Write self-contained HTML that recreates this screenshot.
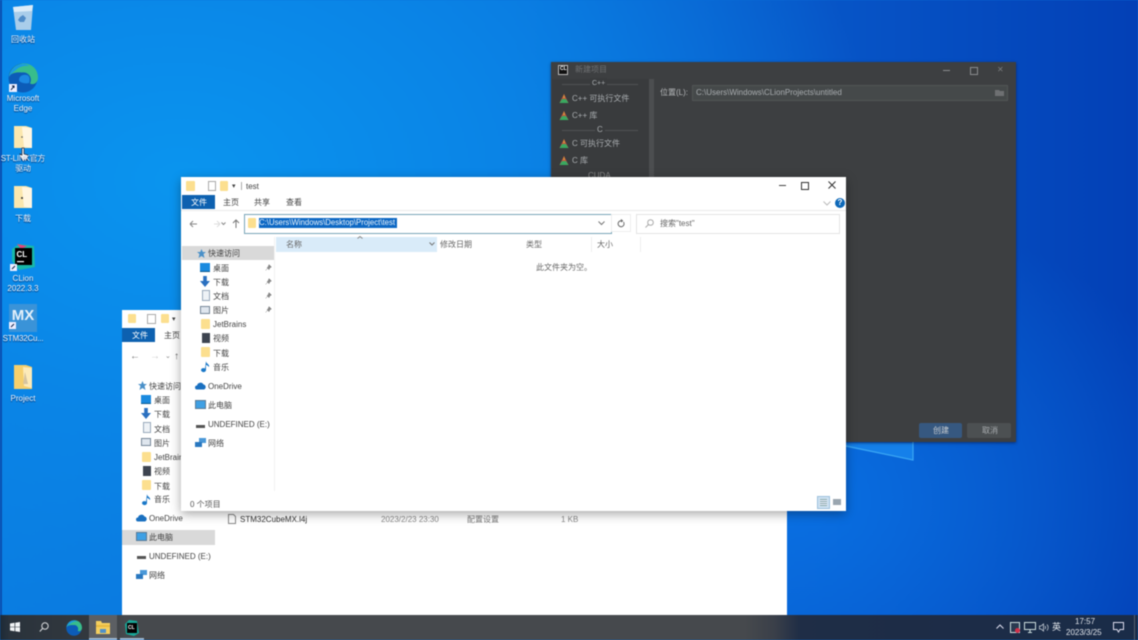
<!DOCTYPE html>
<html><head><meta charset="utf-8"><style>
html,body{margin:0;padding:0;width:1138px;height:640px;overflow:hidden;background:#0a70d8}
#w{position:absolute;left:0;top:0;width:1138px;height:640px;overflow:hidden;filter:blur(.4px);font-family:"Liberation Sans","Noto Sans CJK SC",sans-serif;background:#0a70d8}
.a{position:absolute}
.t{position:absolute;white-space:nowrap;font-size:8px;line-height:12px;color:#444;margin-top:1px}
.d{position:absolute;width:60px;text-align:center;color:#eef6ff;font-size:8px;line-height:10px;text-shadow:0 1px 1px rgba(0,0,50,.7);margin-top:.5px}
svg{position:absolute;overflow:visible}
.f{position:absolute;background:#fcdf8f;border-radius:1px}
.dk{position:absolute;white-space:nowrap;font-size:8px;line-height:12px;color:#a8acaf}
</style></head><body><div id="w">
<div class="a" style="inset:0;background:
radial-gradient(ellipse 420px 300px at 800px 500px,rgba(10,120,235,.75),rgba(10,120,235,0) 100%),
radial-gradient(ellipse 700px 500px at 180px 180px,#0a95ef 0%,rgba(10,135,232,.9) 45%,rgba(10,120,225,0) 100%),
linear-gradient(90deg,#0a7be0 0%,#0a6cd8 45%,#0756c8 72%,#0340b6 100%)"></div>
<div class="a" style="left:0;top:0;width:1.5px;height:615px;background:#0a4fb0"></div>
<svg style="left:0;top:0" width="1138" height="640"><path d="M846 443H913V460L846 447Z" fill="#1580ea"/><path d="M846 446L913 460V442" fill="none" stroke="#3aa6f4" stroke-width="1.2"/></svg>

<!-- desktop icons -->
<svg style="left:11px;top:4px" width="24" height="28" viewBox="0 0 24 28"><path d="M2 3L22 1 20 26H5Z" fill="#a9cdea"/><path d="M2 3L22 1 21 7 3 8Z" fill="#dcecf8"/><path d="M9 13l3-2 3 3-2 4H9l-2-2Z" fill="#4f8cc8"/></svg>
<div class="d" style="left:-7px;top:34px">回收站</div>
<svg style="left:8px;top:63px" width="30" height="30" viewBox="0 0 30 30"><circle cx="15" cy="15" r="14.5" fill="#0c5cb8"/><path d="M1 13C3 4 10 .5 16 .5c8 0 14 6 14 14 0 5-4 8-8 6 3-6-2-12-8-11C8 9 4 10 1 13Z" fill="#38bd8c"/><path d="M1 14C3 5 9 1 15 1c3 0 5 1 6 2-5-1-10 1-13 4-3 2-5 4-7 7Z" fill="#1a9ae4"/><path d="M11 17c0-4 4-6 8-5 3 1 3 5 2 8-4 1-10-.5-10-3Z" fill="#1c88e2"/><rect x="1" y="21" width="8" height="8" fill="#eef"/><path d="M3 27l3-4m-2 0h2v2" stroke="#124" stroke-width="1" fill="none"/></svg>
<div class="d" style="left:-7px;top:93px">Microsoft<br>Edge</div>
<svg style="left:14px;top:125px" width="20" height="24"><path d="M0 1h12l6 2v20H0Z" fill="#fbe7ae"/><path d="M8 2l10 1v20l-8-1Z" fill="#fff6e2"/><circle cx="8" cy="12" r=".8" fill="#555"/></svg>
<svg style="left:19px;top:147px" width="10" height="15"><path d="M3 1v7L1 7l2 6h5l1-5-4-1V1Z" fill="#fff" stroke="#223" stroke-width=".7"/></svg>
<div class="d" style="left:-7px;top:153px;width:60px;letter-spacing:-.2px">ST-LINK官方<br>驱动</div>
<svg style="left:14px;top:185px" width="20" height="24"><path d="M0 1h12l6 2v20H0Z" fill="#fbe7ae"/><path d="M8 2l10 1v20l-8-1Z" fill="#fff6e2"/><circle cx="8" cy="13" r="1" fill="#333"/></svg>
<div class="d" style="left:-7px;top:213px">下载</div>
<svg style="left:9px;top:243px" width="28" height="28" viewBox="0 0 28 28"><path d="M3 6L10 1 25 3 26 24 10 27 3 18Z" fill="#18b8a8"/><path d="M8 1l10 2-6 3Z" fill="#e0447c"/><rect x="6" y="5" width="17" height="17" fill="#000"/><text x="7.5" y="14" font-family="Liberation Sans" font-size="8" font-weight="bold" fill="#fff">CL</text><rect x="8" y="18" width="7" height="1.2" fill="#fff"/><rect x="1" y="21" width="7" height="7" fill="#eef"/><path d="M3 26l3-3" stroke="#124" fill="none"/></svg>
<div class="d" style="left:-7px;top:273px">CLion<br>2022.3.3</div>
<div class="a" style="left:9px;top:304px;width:28px;height:28px;background:#3a93d8"></div>
<div class="a" style="left:9px;top:306px;width:28px;text-align:center;font-size:15px;line-height:20px;font-weight:bold;color:#e4f0fa">MX</div>
<svg style="left:9px;top:322px" width="8" height="8"><rect width="7" height="7" fill="#eef"/><path d="M2 5l3-3" stroke="#124" fill="none"/></svg>
<div class="d" style="left:-7px;top:333px;letter-spacing:-.2px">STM32Cu...</div>
<svg style="left:14px;top:364px" width="20" height="26"><path d="M0 1h12l6 2v22H0Z" fill="#f6cf6c"/><path d="M9 3l9 1v20l-8-2Z" fill="#fdeab8"/><path d="M11 8l3 12h-5Z" fill="#d6c4a0"/></svg>
<div class="d" style="left:-7px;top:393px">Project</div>

<!-- dark window -->
<div class="a" style="left:551px;top:62px;width:465px;height:380px;background:#3d3f41;box-shadow:0 1px 3px rgba(0,0,40,.5)"></div>
<div class="a" style="left:552px;top:79px;width:97px;height:363px;background:#393b3d"></div>
<div class="a" style="left:649px;top:79px;width:5px;height:363px;background:#4c4e50"></div>
<div class="a" style="left:558px;top:65px;width:10px;height:10px;background:#111;border:.5px solid #bbb;box-sizing:border-box"></div>
<div class="a" style="left:560px;top:65px;font-size:5px;line-height:8px;font-weight:bold;color:#fff">CL</div>
<div class="dk" style="left:575px;top:64px;color:#6f7173">新建项目</div>
<div class="a" style="left:943px;top:70px;width:7px;height:1px;background:#8a8c8e"></div>
<div class="a" style="left:970px;top:67px;width:6px;height:6px;border:1px solid #8a8c8e"></div>
<div class="dk" style="left:997px;top:64px;color:#7a7c7e">✕</div>
<div class="a" style="left:562px;top:84px;width:76px;height:1px;background:#4f5153"></div>
<div class="dk" style="left:590px;top:78px;background:#393b3d;padding:0 2px;font-size:7px">C++</div>
<div class="a" style="left:562px;top:130px;width:76px;height:1px;background:#4f5153"></div>
<div class="dk" style="left:595px;top:124px;background:#393b3d;padding:0 2px">C</div>
<div class="dk" style="left:588px;top:170px;color:#888">CUDA</div>
<svg style="left:559px;top:94px" width="10" height="75"><defs><g id="tri"><path d="M5 0L9.5 9H.5Z" fill="#c8503c"/><path d="M.5 9L3 5h4l2.500 4Z" fill="#3aa860"/><path d="M5 0l1 4H4Z" fill="#c8a040"/></g></defs><use href="#tri" y="0"/><use href="#tri" y="17"/><use href="#tri" y="45"/><use href="#tri" y="62"/></svg>
<div class="dk" style="left:572px;top:93px">C++ 可执行文件</div>
<div class="dk" style="left:572px;top:110px">C++ 库</div>
<div class="dk" style="left:572px;top:138px">C 可执行文件</div>
<div class="dk" style="left:572px;top:155px">C 库</div>
<div class="dk" style="left:660px;top:87px;color:#b4b6b8">位置(L):</div>
<div class="a" style="left:692px;top:85px;width:314px;height:14px;background:#45494a;border:1px solid #515455"></div>
<div class="dk" style="left:696px;top:87px">C:\Users\Windows\CLionProjects\untitled</div>
<svg style="left:995px;top:89px" width="10" height="8"><path d="M0 1h4l1 1h4v5H0Z" fill="#6e7072"/></svg>
<div class="a" style="left:919px;top:423px;width:43px;height:15px;background:#365880;border-radius:2px"></div>
<div class="a" style="left:967px;top:423px;width:44px;height:15px;background:#4c5052;border-radius:2px"></div>
<div class="dk" style="left:933px;top:425px;color:#c8ccd0">创建</div>
<div class="dk" style="left:982px;top:425px;color:#a8acaf">取消</div>

<!-- back explorer -->
<div class="a" style="left:122px;top:310px;width:665px;height:305px;background:#fff"></div>
<div class="f" style="left:128px;top:314px;width:8px;height:9px"></div>
<div class="a" style="left:147px;top:314px;width:7px;height:8px;border:1px solid #aaa"></div>
<div class="f" style="left:161px;top:314px;width:8px;height:9px"></div>
<div class="t" style="left:172px;top:313px;font-size:7px">▾</div>
<div class="a" style="left:122px;top:328px;width:33px;height:14px;background:#0d61b0"></div>
<div class="t" style="left:132px;top:329px;color:#fff">文件</div>
<div class="t" style="left:164px;top:329px">主页</div>
<div class="t" style="left:130px;top:350px;font-size:10px;color:#777">←</div>
<div class="t" style="left:150px;top:350px;font-size:10px;color:#ccc">→</div>
<div class="t" style="left:165px;top:350px;font-size:7px;color:#888">⌄</div>
<div class="t" style="left:174px;top:350px;font-size:10px;color:#666">↑</div>
<svg style="left:138px;top:381px" width="9" height="9"><path d="M4.500 0l1.300 3H9L6.500 5l1 4L4.500 7 1.500 9l1-4L0 3h3.200Z" fill="#4a90c8"/></svg>
<div class="t" style="left:149px;top:380px">快速访问</div>
<div class="a" style="left:141px;top:395px;width:10px;height:8px;background:#1a8adf;border-bottom:1px solid #0a5a90"></div>
<div class="t" style="left:154px;top:394px">桌面</div>
<svg style="left:141px;top:408px" width="10" height="11"><path d="M3.200 0h3.600v5H10L5 11 0 5h3.200Z" fill="#2a70c0"/></svg>
<div class="t" style="left:154px;top:408px">下载</div>
<div class="a" style="left:143px;top:422px;width:6px;height:9px;background:#eef2f6;border:1px solid #9ab"></div>
<div class="t" style="left:154px;top:423px">文档</div>
<div class="a" style="left:141px;top:438px;width:8px;height:6px;background:#dfe6ee;border:1px solid #789"></div>
<div class="t" style="left:154px;top:437px">图片</div>
<div class="f" style="left:142px;top:452px;width:9px;height:10px"></div>
<div class="t" style="left:154px;top:451px">JetBrains</div>
<div class="a" style="left:143px;top:466px;width:8px;height:10px;background:#3d4450"></div>
<div class="t" style="left:154px;top:465px">视频</div>
<div class="f" style="left:142px;top:480px;width:9px;height:10px"></div>
<div class="t" style="left:154px;top:480px">下载</div>
<svg style="left:142px;top:494px" width="9" height="11"><path d="M5 0c0 3 4 3 3 6-1-1-2-2-3-2v5a2.500 2 0 1 1-1-1.500Z" fill="#1a78c8"/></svg>
<div class="t" style="left:154px;top:493px">音乐</div>
<svg style="left:136px;top:514px" width="11" height="8"><path d="M2 7.500a2 2 0 0 1 0-4 3.500 3.500 0 0 1 6.500-1 2.600 2.600 0 0 1 .5 5Z" fill="#1a70c0"/></svg>
<div class="t" style="left:149px;top:512px">OneDrive</div>
<div class="a" style="left:122px;top:530px;width:93px;height:15px;background:#d9d9d9"></div>
<div class="a" style="left:136px;top:532px;width:9px;height:7px;background:#3fa0e4;border:1px solid #5a7a96"></div>
<div class="t" style="left:149px;top:531px">此电脑</div>
<div class="a" style="left:137px;top:556px;width:9px;height:3px;background:#555"></div>
<div class="t" style="left:149px;top:550px">UNDEFINED (E:)</div>
<svg style="left:136px;top:570px" width="11" height="10"><rect x="4" y="0" width="7" height="5" fill="#4a98d8"/><rect x="0" y="4" width="7" height="5" fill="#2a78c0"/></svg>
<div class="t" style="left:149px;top:569px">网络</div>
<svg style="left:228px;top:514px" width="8" height="10"><path d="M.5.500h5l2 2v7h-7Z" fill="#fff" stroke="#888"/></svg>
<div class="t" style="left:240px;top:513px;color:#333">STM32CubeMX.l4j</div>
<div class="t" style="left:381px;top:513px;color:#888">2023/2/23 23:30</div>
<div class="t" style="left:467px;top:513px;color:#777">配置设置</div>
<div class="t" style="left:561px;top:513px;color:#888">1 KB</div>

<!-- front explorer -->
<div class="a" style="left:181px;top:177px;width:665px;height:334px;background:#fff;box-shadow:0 3px 10px rgba(0,0,0,.35)"></div>
<div class="f" style="left:186px;top:181px;width:9px;height:10px"></div>
<div class="a" style="left:208px;top:181px;width:6px;height:8px;border:1px solid #aaa"></div>
<div class="f" style="left:220px;top:181px;width:8px;height:10px"></div>
<div class="t" style="left:232px;top:180px;font-size:7px">▾</div>
<div class="a" style="left:241px;top:182px;width:1px;height:8px;background:#aaa"></div>
<div class="t" style="left:246px;top:180px">test</div>
<div class="a" style="left:779px;top:185px;width:7px;height:1px;background:#444"></div>
<div class="a" style="left:801px;top:182px;width:6px;height:6px;border:1px solid #333"></div>
<svg style="left:828px;top:181px" width="8" height="8"><path d="M.5.500l7 7m0-7l-7 7" stroke="#333"/></svg>
<div class="a" style="left:182px;top:195px;width:33px;height:14px;background:#0d61b0"></div>
<div class="t" style="left:191px;top:196px;color:#fff">文件</div>
<div class="t" style="left:223px;top:196px">主页</div>
<div class="t" style="left:254px;top:196px">共享</div>
<div class="t" style="left:286px;top:196px">查看</div>
<div class="a" style="left:181px;top:210px;width:665px;height:1px;background:#eaeaea"></div>
<svg style="left:823px;top:201px" width="8" height="5"><path d="M.5.500L4 4 7.500.500" fill="none" stroke="#bbb"/></svg>
<div class="a" style="left:835px;top:198px;width:10px;height:10px;border-radius:50%;background:#0d68b8;color:#fff;font-size:8px;line-height:10px;text-align:center;font-weight:bold">?</div>
<svg style="left:189px;top:219px" width="60" height="10"><path d="M1 5h7M1 5l3-3M1 5l3 3" fill="none" stroke="#888"/><path d="M25 5h6M31 5l-3-3M31 5l-3 3" fill="none" stroke="#ddd"/></svg>
<svg style="left:221px;top:222px" width="5" height="4"><path d="M.500.500l2 2 2-2" fill="none" stroke="#888"/></svg>
<svg style="left:232px;top:219px" width="8" height="10"><path d="M4 9V1M1 4l3-3 3 3" fill="none" stroke="#777"/></svg>
<div class="a" style="left:244px;top:214px;width:366px;height:18px;border:1px solid #7aa6b8"></div>
<div class="f" style="left:248px;top:218px;width:8px;height:10px"></div>
<div class="a" style="left:259px;top:218px;width:138px;height:10px;background:#0d68c4"></div>
<div class="t" style="left:259px;top:216px;color:#e8f2fb;font-size:7.8px">C:\Users\Windows\Desktop\Project\test</div>
<svg style="left:598px;top:221px" width="7" height="5"><path d="M.500.500L3.500 3.500 6.500.500" fill="none" stroke="#777"/></svg>
<div class="a" style="left:611px;top:214px;width:20px;height:18px;border:1px solid #eee;box-sizing:border-box"></div>
<svg style="left:617px;top:219px" width="8" height="9"><path d="M6.500 3a3 3 0 1 1-2-1.200M4 .500l1.500 1.300L4 3" fill="none" stroke="#666"/></svg>
<div class="a" style="left:636px;top:214px;width:202px;height:18px;border:1px solid #e4e4e4"></div>
<svg style="left:645px;top:219px" width="9" height="9"><circle cx="5.500" cy="3.500" r="2.800" fill="none" stroke="#aaa"/><path d="M3.500 5.500L.5 8.500" stroke="#aaa"/></svg>
<div class="t" style="left:660px;top:217px;color:#666">搜索"test"</div>
<div class="a" style="left:276px;top:237px;width:161px;height:15px;background:#d9ebf9"></div>
<div class="t" style="left:286px;top:238px;color:#666">名称</div>
<svg style="left:357px;top:236px" width="6" height="3"><path d="M.500 2.500L3 .500l2.500 2" fill="none" stroke="#888"/></svg>
<svg style="left:429px;top:242px" width="6" height="4"><path d="M.500.500L3 3 5.500.500" fill="none" stroke="#777"/></svg>
<div class="t" style="left:440px;top:238px;color:#666">修改日期</div>
<div class="t" style="left:526px;top:238px;color:#666">类型</div>
<div class="a" style="left:591px;top:237px;width:1px;height:15px;background:#eee"></div>
<div class="t" style="left:597px;top:238px;color:#666">大小</div>
<div class="a" style="left:640px;top:237px;width:1px;height:15px;background:#eee"></div>
<div class="t" style="left:536px;top:261px;color:#666">此文件夹为空。</div>
<div class="a" style="left:274px;top:237px;width:1px;height:254px;background:#f2f2f2"></div>
<div class="a" style="left:182px;top:246px;width:92px;height:14px;background:#d9d9d9"></div>
<svg style="left:197px;top:249px" width="9" height="9"><path d="M4.500 0l1.300 3H9L6.500 5l1 4L4.500 7 1.500 9l1-4L0 3h3.200Z" fill="#4a90c8"/></svg>
<div class="t" style="left:208px;top:247px">快速访问</div>
<div class="a" style="left:200px;top:263px;width:10px;height:8px;background:#1a8adf;border-bottom:1px solid #0a5a90"></div>
<div class="t" style="left:213px;top:262px">桌面</div>
<svg style="left:200px;top:276px" width="10" height="11"><path d="M3.200 0h3.600v5H10L5 11 0 5h3.200Z" fill="#2a70c0"/></svg>
<div class="t" style="left:213px;top:276px">下载</div>
<div class="a" style="left:202px;top:290px;width:6px;height:9px;background:#eef2f6;border:1px solid #9ab"></div>
<div class="t" style="left:213px;top:290px">文档</div>
<div class="a" style="left:200px;top:306px;width:8px;height:6px;background:#dfe6ee;border:1px solid #789"></div>
<div class="t" style="left:213px;top:304px">图片</div>
<svg style="left:265px;top:264px" width="7" height="50"><g id="pin"><path d="M4 .500l2.500 2.500-1.500.700-1 2L2 3.700l1-.7ZM2.500 4.500L.500 6.500" fill="#888" stroke="#888" stroke-width=".5"/></g><use href="#pin" y="14"/><use href="#pin" y="28"/><use href="#pin" y="42"/></svg>
<div class="f" style="left:201px;top:319px;width:9px;height:10px"></div>
<div class="t" style="left:213px;top:318px">JetBrains</div>
<div class="a" style="left:202px;top:333px;width:8px;height:10px;background:#3d4450"></div>
<div class="t" style="left:213px;top:332px">视频</div>
<div class="f" style="left:201px;top:347px;width:9px;height:10px"></div>
<div class="t" style="left:213px;top:347px">下载</div>
<svg style="left:201px;top:361px" width="9" height="11"><path d="M5 0c0 3 4 3 3 6-1-1-2-2-3-2v5a2.500 2 0 1 1-1-1.500Z" fill="#1a78c8"/></svg>
<div class="t" style="left:213px;top:361px">音乐</div>
<svg style="left:195px;top:382px" width="11" height="8"><path d="M2 7.500a2 2 0 0 1 0-4 3.500 3.500 0 0 1 6.500-1 2.600 2.600 0 0 1 .5 5Z" fill="#1a70c0"/></svg>
<div class="t" style="left:208px;top:380px">OneDrive</div>
<div class="a" style="left:195px;top:400px;width:9px;height:7px;background:#3fa0e4;border:1px solid #5a7a96"></div>
<div class="t" style="left:208px;top:399px">此电脑</div>
<div class="a" style="left:196px;top:425px;width:9px;height:3px;background:#555"></div>
<div class="t" style="left:208px;top:418px">UNDEFINED (E:)</div>
<svg style="left:195px;top:438px" width="11" height="10"><rect x="4" y="0" width="7" height="5" fill="#4a98d8"/><rect x="0" y="4" width="7" height="5" fill="#2a78c0"/></svg>
<div class="t" style="left:208px;top:437px">网络</div>
<div class="t" style="left:190px;top:498px;color:#555">0 个项目</div>
<div class="a" style="left:817px;top:496px;width:13px;height:13px;background:#cfe2f2;border:1px solid #9cc0dc;box-sizing:border-box"></div>
<div class="a" style="left:820px;top:499px;width:7px;height:7px;background:repeating-linear-gradient(#8aa 0 1px,#eef 1px 2px)"></div>
<div class="a" style="left:833px;top:499px;width:8px;height:6px;background:#9aa6b0"></div>

<!-- taskbar -->
<div class="a" style="left:0;top:615px;width:1138px;height:25px;background:linear-gradient(90deg,#1c2a38 0,#2a333c 10px,#34393f 100px,#46494d 125px,#46494d 745px,#3a3f49 775px,#1f2d46 800px,#1a2c48 1138px)"></div>
<svg style="left:10px;top:622px" width="10" height="10"><path d="M0 1.500L4.500.800V4.700H0ZM5.200.700L10 0V4.700H5.200ZM0 5.300H4.500V9.200L0 8.500ZM5.200 5.300H10V10L5.200 9.300Z" fill="#f2f4f6"/></svg>
<svg style="left:39px;top:622px" width="10" height="10"><circle cx="6" cy="4" r="3.200" fill="none" stroke="#d8dadc"/><path d="M3.500 6.500L.8 9.500" stroke="#d8dadc"/></svg>
<svg style="left:66px;top:620px" width="16" height="16" viewBox="0 0 30 30"><circle cx="15" cy="15" r="14.500" fill="#0c5cb8"/><path d="M1 13C3 4 10 .5 16 .5c8 0 14 6 14 14 0 5-4 8-8 6 3-6-2-12-8-11C8 9 4 10 1 13Z" fill="#38bd8c"/><path d="M1 14C3 5 9 1 15 1c3 0 5 1 6 2-5-1-10 1-13 4-3 2-5 4-7 7Z" fill="#1a9ae4"/></svg>
<div class="a" style="left:89px;top:615px;width:28px;height:25px;background:#5c5f63"></div>
<div class="a" style="left:89px;top:638px;width:28px;height:2px;background:#9fb8d0"></div>
<svg style="left:96px;top:621px" width="14" height="13"><path d="M0 0h5l1 2h8v11H0Z" fill="#f5cf5e"/><rect x="0" y="4" width="14" height="2" fill="#e8b93e"/><rect x="4" y="8" width="6" height="4" fill="#4f90c8"/></svg>
<svg style="left:124px;top:620px" width="15" height="16" viewBox="0 0 15 16"><path d="M1 4L5 0l8 1 2 12-5 3-8-2Z" fill="#18a898"/><rect x="3" y="3" width="10" height="10" fill="#000"/><text x="4" y="9" font-family="Liberation Sans" font-size="5" font-weight="bold" fill="#fff">CL</text></svg>
<div class="a" style="left:120px;top:638px;width:24px;height:2px;background:#9fb8d0"></div>
<svg style="left:996px;top:624px" width="8" height="5"><path d="M.5 4.500L4 1l3.500 3.500" fill="none" stroke="#dde"/></svg>
<div class="a" style="left:1010px;top:622px;width:8px;height:9px;border:1px solid #cdd;background:#2a3a50"></div>
<div class="a" style="left:1015px;top:628px;width:5px;height:5px;border-radius:50%;background:#d0304a"></div>
<svg style="left:1024px;top:622px" width="12" height="11"><path d="M.5.500h11v7H.5ZM4 10.500h4M6 8v2" fill="none" stroke="#cdd"/></svg>
<svg style="left:1039px;top:623px" width="10" height="9"><path d="M.5 3h1.500L4.500 1v7L2 6H.5ZM6 3c.7.900.7 2.100 0 3M8 1.500c1.500 1.800 1.500 4.200 0 6" fill="none" stroke="#c8d0d8" stroke-width=".8"/></svg>
<div class="t" style="left:1052px;top:620px;color:#e8ecf0;font-size:9px">英</div>
<div class="t" style="left:1075px;top:615px;color:#e0e4ea">17:57</div>
<div class="t" style="left:1066px;top:626px;color:#e0e4ea;font-size:8px">2023/3/25</div>
<svg style="left:1113px;top:622px" width="11" height="11"><path d="M.5.500h10v7H7L5.500 10 4 7.500H.5Z" fill="none" stroke="#dde"/></svg>
<div class="a" style="left:1134px;top:615px;width:1px;height:25px;background:#55606e"></div>
</div></body></html>
